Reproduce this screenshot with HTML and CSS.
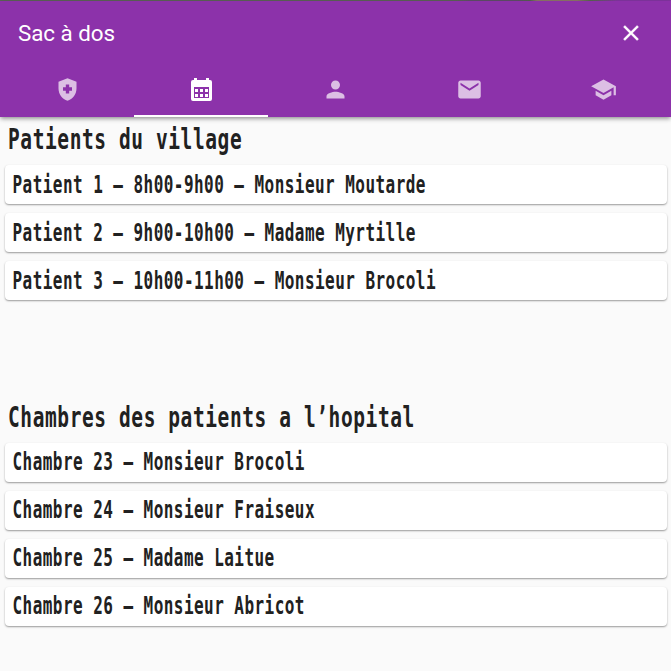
FILE: index.html
```
<!DOCTYPE html>
<html lang="fr">
<head>
<meta charset="utf-8">
<title>Sac à dos</title>
<link rel="stylesheet" href="styles.css">
</head>
<body>
<div class="backdrop"></div>
<header class="app-bar">
  <div class="toolbar">
    <h1 class="title">Sac à dos</h1>
    <svg class="icon close" viewBox="0 0 24 24"><path d="M19 6.41 17.59 5 12 10.59 6.41 5 5 6.41 10.59 12 5 17.59 6.41 19 12 13.41 17.59 19 19 17.59 13.41 12z"/></svg>
  </div>
  <nav class="tabs">
    <div class="tab"><svg class="icon" viewBox="0 0 24 24"><path d="M10.5 13H8v-3h2.500V7.500h3V10H16v3h-2.500v2.500h-3V13zM12 2 4 5v6.090c0 5.050 3.410 9.760 8 10.910 4.590-1.150 8-5.860 8-10.910V5l-8-3z" fill-rule="evenodd"/></svg></div>
    <div class="tab active"><svg class="icon calendar" viewBox="0 0 27 27"><path fill-rule="evenodd" d="M6 2h3v2h9V2h3v2h1q2 0 2 2v17q0 2-2 2H5q-2 0-2-2V6q0-2 2-2h1zM6 11v11h15V11z"/><path d="M7 13h3v3H7zM12 13h3v3h-3zM17 13h3v3h-3zM7 18h3v3H7zM12 18h3v3h-3zM17 18h3v3h-3z"/></svg></div>
    <div class="tab"><svg class="icon" viewBox="0 0 24 24"><path d="M12 12c2.210 0 4-1.790 4-4s-1.790-4-4-4-4 1.790-4 4 1.790 4 4 4zm0 2c-2.670 0-8 1.340-8 4v2h16v-2c0-2.660-5.330-4-8-4z"/></svg></div>
    <div class="tab"><svg class="icon" viewBox="0 0 24 24"><path d="M20 4H4c-1.100 0-1.990.9-1.990 2L2 18c0 1.100.9 2 2 2h16c1.100 0 2-.9 2-2V6c0-1.100-.9-2-2-2zm0 4-8 5-8-5V6l8 5 8-5v2z"/></svg></div>
    <div class="tab"><svg class="icon" viewBox="0 0 24 24"><path d="M5 13.180v4L12 21l7-3.820v-4L12 17l-7-3.820zM12 3 1 9l11 6 9-4.910V17h2V9L12 3z"/></svg></div>
  </nav>
</header>
<main>
  <section class="group">
    <h2 class="heading"><span class="tall">Patients du village</span></h2>
    <div class="card"><span class="tall">Patient 1 – 8h00-9h00 – Monsieur Moutarde</span></div>
    <div class="card"><span class="tall">Patient 2 – 9h00-10h00 – Madame Myrtille</span></div>
    <div class="card"><span class="tall">Patient 3 – 10h00-11h00 – Monsieur Brocoli</span></div>
  </section>
  <section class="group">
    <h2 class="heading"><span class="tall">Chambres des patients a l’hopital</span></h2>
    <div class="card"><span class="tall">Chambre 23 – Monsieur Brocoli</span></div>
    <div class="card"><span class="tall">Chambre 24 – Monsieur Fraiseux</span></div>
    <div class="card"><span class="tall">Chambre 25 – Madame Laitue</span></div>
    <div class="card"><span class="tall">Chambre 26 – Monsieur Abricot</span></div>
  </section>
</main>
</body>
</html>
```
FILE: styles.css
```
* { box-sizing: border-box; }
body {
  margin: 0;
  height: 671px;
  overflow: hidden;
  background: #fafafa;
  color: #212121;
}
.backdrop {
  height: 1px;
  background: linear-gradient(90deg, #5c6256 0 68%, #5f4d68 70% 77%, #54604f 79%, #8c7468 80% 86%, #59654f 88%, #8235a0 92%);
}
.app-bar {
  position: relative;
  height: 116px;
  background: #8c32aa;
  box-shadow: 0 2px 4px -1px rgba(0,0,0,.3), 0 2px 5px rgba(0,0,0,.2);
}
.toolbar {
  display: flex;
  align-items: center;
  justify-content: space-between;
  height: 64px;
  padding: 0 27px 0 18px;
}
.title {
  margin: 0;
  color: #fff;
  font: 400 22.400px/28px Roboto, sans-serif;
  letter-spacing: -.05px;
}
.icon { width: 27px; height: 27px; fill: currentColor; display: block; }
.close { color: #fff; width: 26px; height: 26px; stroke: currentColor; stroke-width: .3; }
.tabs { display: flex; height: 52px; }
.tab {
  flex: 1;
  display: flex;
  justify-content: center;
  padding-top: 11px;
  color: #dcbfe4;
}
.tab.active { color: #fff; border-bottom: 2px solid #fff; }
.group { height: 277.500px; }
.heading, .card { font-family: "DejaVu Sans Mono", monospace; font-weight: 700; white-space: pre; }
.heading {
  display: flex;
  align-items: center;
  height: 48.400px;
  margin: 0;
  padding: 0 0 3px 8px;
  font-size: 19.500px;
  letter-spacing: .59px;
}
.card {
  display: flex;
  align-items: center;
  height: 39px;
  margin: 0 4.500px 9px;
  padding: 0 0 1px 8px;
  border-radius: 4px;
  background: #fff;
  box-shadow: 0 1px 2px rgba(0,0,0,.34), 0 1px 1px rgba(0,0,0,.06);
  font-size: 16px;
  letter-spacing: .45px;
}
.tall { display: block; transform: scaleY(1.500); }
.heading .tall { transform: scaleY(1.480); }
```
